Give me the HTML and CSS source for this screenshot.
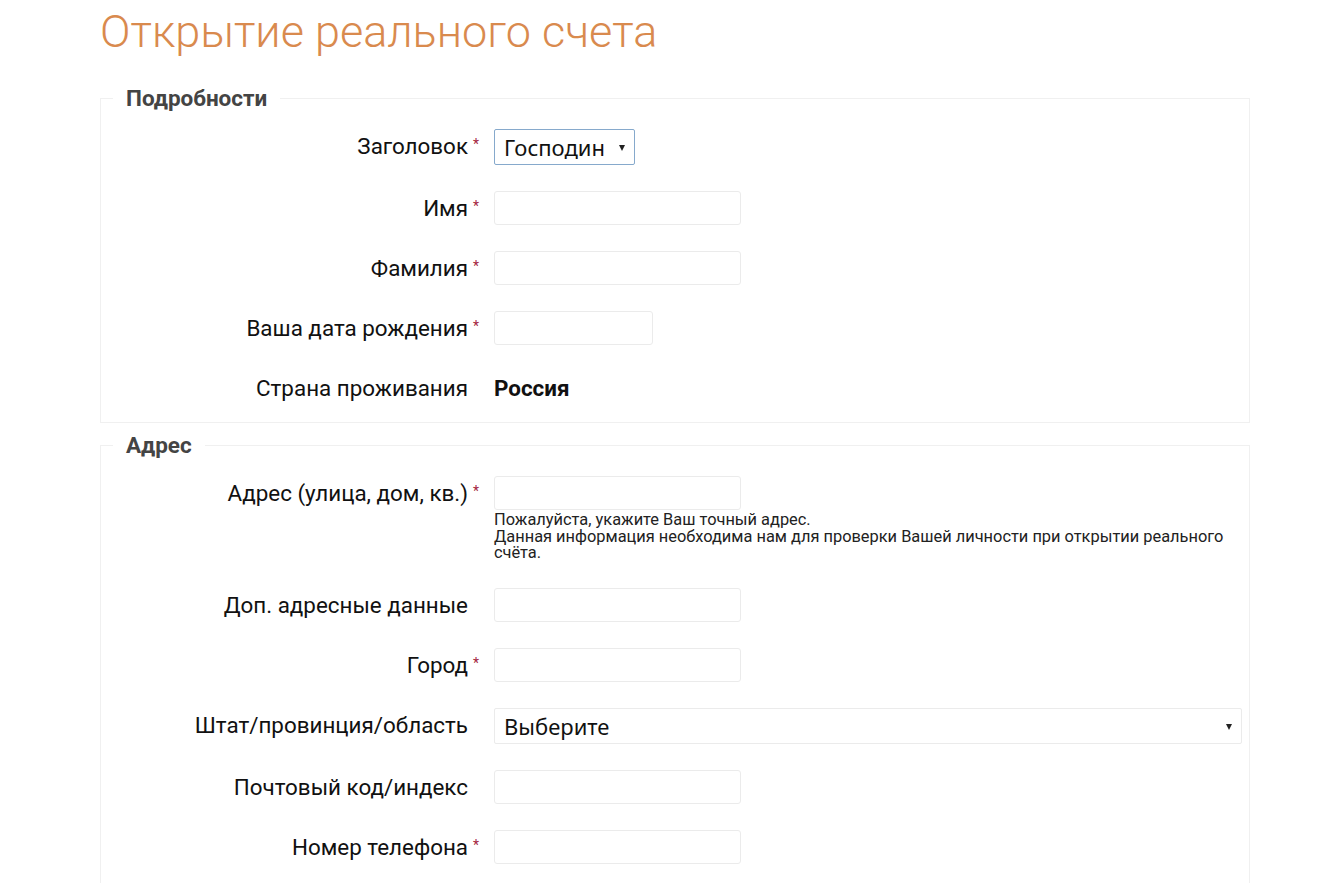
FILE: index.html
```html
<!DOCTYPE html>
<html lang="ru">
<head>
    <meta charset="UTF-8">
    <meta name="viewport" content="width=device-width, initial-scale=1.0">
    <title>Открытие реального счета</title>
    <link rel="stylesheet" href="styles.css">
</head>
<body>
    <div id="pageContainer">
        <h1 class="pageTitle">Открытие реального счета</h1>

        <fieldset class="formSection">
            <legend>Подробности</legend>
            <div class="formRow">
                <label class="rowLabel" for="salutation">Заголовок</label>
                <span class="required">*</span>
                <div class="rowField">
                    <div class="selectBox selectFocused selectSmall">
                        <select id="salutation">
                            <option>Господин</option>
                            <option>Госпожа</option>
                        </select>
                    </div>
                </div>
            </div>
            <div class="formRow">
                <label class="rowLabel" for="firstName">Имя</label>
                <span class="required">*</span>
                <div class="rowField"><input type="text" id="firstName" class="textInput"></div>
            </div>
            <div class="formRow">
                <label class="rowLabel" for="lastName">Фамилия</label>
                <span class="required">*</span>
                <div class="rowField"><input type="text" id="lastName" class="textInput"></div>
            </div>
            <div class="formRow">
                <label class="rowLabel" for="birthDate">Ваша дата рождения</label>
                <span class="required">*</span>
                <div class="rowField"><input type="text" id="birthDate" class="textInput dateInput"></div>
            </div>
            <div class="formRow">
                <span class="rowLabel">Страна проживания</span>
                <span class="required"></span>
                <div class="rowField"><span class="staticValue">Россия</span></div>
            </div>
        </fieldset>

        <fieldset class="formSection addressSection">
            <legend>Адрес</legend>
            <div class="formRow">
                <label class="rowLabel" for="street">Адрес (улица, дом, кв.)</label>
                <span class="required">*</span>
                <div class="rowField">
                    <input type="text" id="street" class="textInput">
                    <p class="helpText">Пожалуйста, укажите Ваш точный адрес.<br>Данная информация необходима нам для проверки Вашей личности при открытии реального счёта.</p>
                </div>
            </div>
            <div class="formRow">
                <label class="rowLabel" for="street2">Доп. адресные данные</label>
                <span class="required"></span>
                <div class="rowField"><input type="text" id="street2" class="textInput"></div>
            </div>
            <div class="formRow">
                <label class="rowLabel" for="city">Город</label>
                <span class="required">*</span>
                <div class="rowField"><input type="text" id="city" class="textInput"></div>
            </div>
            <div class="formRow">
                <label class="rowLabel" for="region">Штат/провинция/область</label>
                <span class="required"></span>
                <div class="rowField">
                    <div class="selectBox">
                        <select id="region">
                            <option>Выберите</option>
                        </select>
                    </div>
                </div>
            </div>
            <div class="formRow">
                <label class="rowLabel" for="zip">Почтовый код/индекс</label>
                <span class="required"></span>
                <div class="rowField"><input type="text" id="zip" class="textInput"></div>
            </div>
            <div class="formRow">
                <label class="rowLabel" for="phone">Номер телефона</label>
                <span class="required">*</span>
                <div class="rowField"><input type="text" id="phone" class="textInput"></div>
            </div>
        </fieldset>
    </div>
</body>
</html>
```

FILE: styles.css
```css
body {
    margin: 0;
    padding: 0;
    background-color: #fff;
    color: #222;
    font-family: Roboto, "Noto Sans", sans-serif;
}
#pageContainer {
    width: 1150px;
    margin-left: 100px;
}
.pageTitle {
    margin: 0;
    padding-top: 4px;
    font-size: 45px;
    font-weight: 300;
    line-height: 56px;
    color: #d98a4e;
}
.formSection {
    margin: 26px 0 0 0;
    padding: 19px 7px 17px 0;
    border: 1px solid #f0f0f0;
}
.formSection + .formSection {
    margin-top: 10px;
}
.addressSection {
    padding-bottom: 40px;
}
.formSection legend {
    margin-left: 12px;
    padding: 0 13px;
    font-size: 22.5px;
    font-weight: bold;
    line-height: 24px;
    color: #444;
}
.formRow {
    display: grid;
    grid-template-columns: 367px 26px 1fr;
    margin-bottom: 26px;
}
.formRow:last-child {
    margin-bottom: 0;
}
.rowLabel {
    text-align: right;
    font-size: 22.4px;
    line-height: 34px;
    color: #111;
}
.required {
    padding-left: 5px;
    font-size: 14px;
    line-height: 30px;
    color: #a3253e;
}
.rowField {
    min-height: 34px;
}
.textInput {
    box-sizing: border-box;
    width: 247px;
    height: 34px;
    margin: 0;
    padding: 4px 8px;
    border: 1px solid #ebebeb;
    border-radius: 3px;
    font-family: Roboto, sans-serif;
    font-size: 18px;
    display: block;
}
.dateInput {
    width: 159px;
}
.staticValue {
    font-size: 22.4px;
    font-weight: bold;
    line-height: 34px;
    color: #111;
}
.helpText {
    margin: 2px 0 0 0;
    font-size: 16.4px;
    line-height: 16.5px;
    color: #222;
}
.selectBox {
    position: relative;
    box-sizing: border-box;
    height: 36px;
    border: 1px solid #ebebeb;
    border-radius: 2px;
}
.selectSmall {
    width: 141px;
}
.selectFocused {
    border-color: #86a9cc;
}
.selectBox select {
    width: 100%;
    height: 100%;
    margin: 0;
    padding: 0 26px 0 9px;
    border: none;
    background: transparent;
    -webkit-appearance: none;
    appearance: none;
    font-family: "Noto Sans", "Liberation Sans", sans-serif;
    font-size: 22px;
    color: #111;
    outline: none;
}
.selectBox::after {
    content: "";
    position: absolute;
    right: 9px;
    top: 15px;
    border-left: 3px solid transparent;
    border-right: 3px solid transparent;
    border-top: 6px solid #222;
    pointer-events: none;
}
```
